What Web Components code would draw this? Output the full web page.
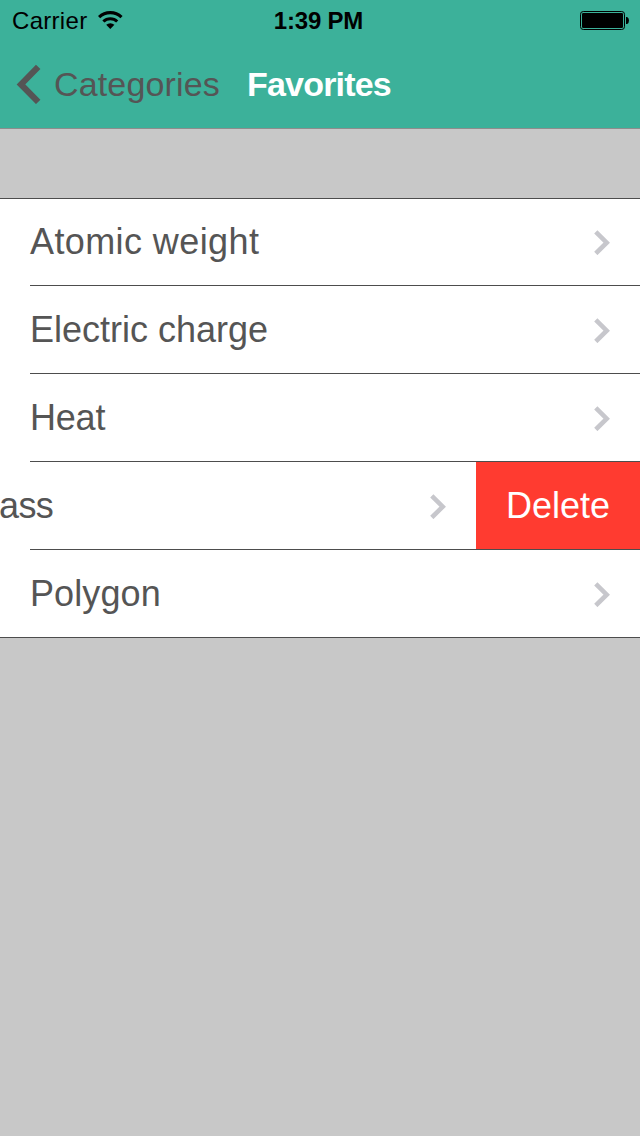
<!DOCTYPE html>
<html lang="en">
<head>
<meta charset="utf-8">
<title>Favorites</title>
<style>
    body {
        margin: 0;
        height: 1136px;
        overflow: hidden;
        background: #c8c8c8;
        color: #555;
        font-family: "Liberation Sans", Arial, sans-serif;
    }
</style>
</head>
<body>
<status-bar carrier="Carrier" time="1:39 PM"></status-bar>
<nav-bar back="Categories">Favorites</nav-bar>
<table-view>
    <table-row style="letter-spacing: 0.4px">Atomic weight</table-row>
    <table-row>Electric charge</table-row>
    <table-row style="letter-spacing: -0.2px">Heat</table-row>
    <table-row swiped>ass</table-row>
    <table-row style="letter-spacing: 0.1px">Polygon</table-row>
</table-view>
<script>
class StatusBar extends HTMLElement {
    constructor() {
        super();
        this.attachShadow({ mode: 'open' });
    }

    connectedCallback() {
        this.shadowRoot.innerHTML = `
            <style>
                :host {
                    display: grid;
                    grid-template-columns: 1fr auto 1fr;
                    grid-template-rows: 40px;
                    align-items: center;
                    height: 40px;
                    padding: 0 11px 0 12px;
                    background: #3cb19a;
                    color: #000;
                    font-size: 24px;
                    line-height: 40px;
                }
                .left {
                    display: flex;
                    align-items: center;
                    height: 40px;
                    gap: 11px;
                    letter-spacing: 0.3px;
                }
                span {
                    padding-top: 2px;
                }
                .time {
                    font-weight: bold;
                    letter-spacing: -0.2px;
                    margin-right: 4px;
                }
                .battery {
                    justify-self: end;
                }
                svg {
                    display: block;
                }
            </style>
            <div class="left">
                <span>${this.getAttribute('carrier')}</span>
                <svg width="26" height="20" viewBox="0 0 26 20">
                    <path d="M1.1 7.2a16 16 0 0 1 22.4 0M5.4 11.5a10 10 0 0 1 13.8 0" fill="none" stroke="#000" stroke-width="3.1"/>
                    <path d="M12.3 19l-4.1-4.2a6.2 6.2 0 0 1 8.2 0z"/>
                </svg>
            </div>
            <span class="time">${this.getAttribute('time')}</span>
            <svg class="battery" width="49" height="20" viewBox="0 0 49 20">
                <rect x=".5" y="1.5" width="44" height="18" rx="2.8" fill="none" stroke="#000"/>
                <rect x="2" y="3" width="41" height="15" rx="1.3"/>
                <path d="M46 7h1.2q1.8 1 1.8 3.5t-1.8 3.5h-1.2z"/>
            </svg>
        `;
    }
}

class NavBar extends HTMLElement {
    constructor() {
        super();
        this.attachShadow({ mode: 'open' });
    }

    connectedCallback() {
        this.shadowRoot.innerHTML = `
            <style>
                :host {
                    display: flex;
                    align-items: center;
                    box-sizing: border-box;
                    height: 89px;
                    padding-left: 16px;
                    background: #3cb19a;
                    border-bottom: 1px solid #8d8d8d;
                    font-size: 34px;
                    line-height: 88px;
                }
                .back {
                    display: flex;
                    align-items: center;
                    width: 231px;
                    gap: 13px;
                    letter-spacing: 0.15px;
                }
                .title {
                    color: #fff;
                    font-weight: bold;
                    letter-spacing: -0.8px;
                }
            </style>
            <div class="back">
                <svg width="25" height="40" viewBox="0 0 25 40">
                    <path d="M22.2 2.9L5 20.4l17.2 17.5" fill="none" stroke="#555" stroke-width="6.2"/>
                </svg>
                <span>${this.getAttribute('back')}</span>
            </div>
            <div class="title"><slot></slot></div>
        `;
    }
}

class TableView extends HTMLElement {
    constructor() {
        super();
        this.attachShadow({ mode: 'open' }).innerHTML = `
            <style>
                :host {
                    display: block;
                    margin-top: 69px;
                    background: #fff;
                    border-top: 1px solid #4d4d4d;
                }
                ::slotted(:last-of-type) {
                    --inset: 0px;
                }
            </style>
            <slot></slot>
        `;
    }
}

class TableRow extends HTMLElement {
    constructor() {
        super();
        this.attachShadow({ mode: 'open' });
    }

    connectedCallback() {
        const action = this.hasAttribute('swiped') ? '<div class="delete">Delete</div>' : '';
        this.shadowRoot.innerHTML = `
            <style>
                :host {
                    display: block;
                    overflow: hidden;
                    font-size: 36px;
                    line-height: 86px;
                }
                .row {
                    display: flex;
                    height: 87px;
                }
                :host(:first-of-type) .row {
                    height: 86px;
                }
                .content {
                    flex: 1;
                    display: flex;
                    align-items: center;
                    justify-content: space-between;
                    padding: 0 30px;
                }
                :host([swiped]) .content {
                    padding-left: 0;
                }
                :host([swiped]) .content span {
                    letter-spacing: -0.6px;
                    margin-left: -1px;
                }
                .delete {
                    width: 164px;
                    background: #ff3b30;
                    color: #fff;
                    line-height: 88px;
                    text-align: center;
                }
                .line {
                    height: 1px;
                    margin-left: var(--inset, 30px);
                    background: #4d4d4d;
                }
                svg {
                    margin-top: 1px;
                }
            </style>
            <div class="row">
                <div class="content">
                    <span><slot></slot></span>
                    <svg width="17" height="25" viewBox="0 0 17 25">
                        <path d="M2.8 1.9l10.9 10.8L2.8 23.5" fill="none" stroke="#c7c7cc" stroke-width="4.6"/>
                    </svg>
                </div>
                ${action}
            </div>
            <div class="line"></div>
        `;
    }
}

customElements.define('status-bar', StatusBar);
customElements.define('nav-bar', NavBar);
customElements.define('table-view', TableView);
customElements.define('table-row', TableRow);
</script>
</body>
</html>
